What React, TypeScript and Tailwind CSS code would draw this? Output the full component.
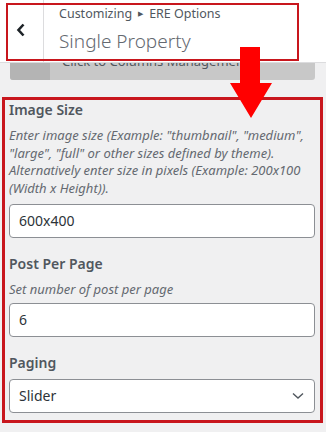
import React from 'react';

const RED = 'border-[#c8161d]';

const Field: React.FC<{ label: string; desc?: React.ReactNode; children: React.ReactNode; first?: boolean }> = ({ label, desc, children, first }) => (
  <div className={first ? '' : 'mt-[16px]'}>
    <div className="text-[14px] leading-[20px] font-semibold text-[#50575e]">{label}</div>
    {desc && <div className="mt-[7px] text-[13px] leading-[17.7px] italic text-[#646970]">{desc}</div>}
    {children}
  </div>
);

const App: React.FC = () => {
  return (
    <div className="relative w-[326px] h-[432px] bg-[#f0f0f1] overflow-hidden font-['Noto_Sans','Open_Sans',sans-serif]">
      {/* customizer header */}
      <header className="relative z-10 h-[63px] bg-white border-b border-[#dcdcde] flex">
        <div className="w-[44px] shrink-0 border-r border-[#dcdcde] flex items-center justify-center">
          <svg width="10" height="14" viewBox="0 0 10 14" className="-mt-[2px] -ml-[2px]">
            <path d="M7.5 1.5 L2.5 7 L7.5 12.5" fill="none" stroke="#1d2327" strokeWidth="2.6" />
          </svg>
        </div>
        <div className="pl-[15px] pt-[4px]">
          <div className="text-[12.5px] leading-[20px] text-[#50575e] flex items-center">
            Customizing
            <span className="mx-[6px] text-[7px] text-[#50575e]">▶</span>
            ERE Options
          </div>
          <div className="mt-[4px] text-[19px] leading-[26px] font-light text-[#646970]">Single Property</div>
        </div>
        <div className={`absolute left-[6px] top-[3px] w-[293px] h-[58px] border-[2px] ${RED}`} />
      </header>

      {/* partially hidden button */}
      <div className="relative mx-[10px] -mt-[12px] h-[29px] w-[305px] rounded-b-[3px] bg-[#c8c8c8] flex overflow-hidden">
        <div className="w-[40px] bg-[#b4b4b4]" />
        <div className="pl-[12px] pt-[1px] text-[13px] leading-[18px] text-[#50575e]">Click to Columns Management</div>
      </div>

      {/* options panel */}
      <section className={`mt-[17px] mx-[2px] w-[321px] border-[3px] ${RED} pl-[4px] pr-[5px] pt-0 pb-[7px]`}>
        <Field label="Image Size" first desc={<>Enter image size (Example: "thumbnail", "medium", "large", "full" or other sizes defined by theme). Alternatively enter size in pixels (Example: 200x100 (Width x Height)).</>}>
          <div className="mt-[6px] h-[34px] rounded-[4px] border border-[#8c8f94] bg-white px-[9px] flex items-center text-[14px] text-[#2c3338]">600x400</div>
        </Field>
        <Field label="Post Per Page" desc="Set number of post per page">
          <div className="mt-[4px] h-[34px] rounded-[4px] border border-[#8c8f94] bg-white px-[9px] flex items-center text-[14px] text-[#2c3338]">6</div>
        </Field>
        <Field label="Paging">
          <div className="mt-[6px] h-[34px] rounded-[4px] border border-[#8c8f94] bg-white pl-[9px] pr-[10px] flex items-center justify-between text-[14px] text-[#2c3338]">
            <span>Slider</span>
            <svg width="12" height="8" viewBox="0 0 12 8">
              <path d="M1 1.5 L6 6 L11 1.5" fill="none" stroke="#50575e" strokeWidth="1.4" />
            </svg>
          </div>
        </Field>
      </section>

      {/* red arrow */}
      <svg className="absolute left-[229px] top-[47px] z-20" width="44" height="72" viewBox="0 0 44 72">
        <path d="M11 0 H31 V36 H43 L22 71 L1 36 H11 Z" fill="#ff0000" />
      </svg>
    </div>
  );
};

export default App;
